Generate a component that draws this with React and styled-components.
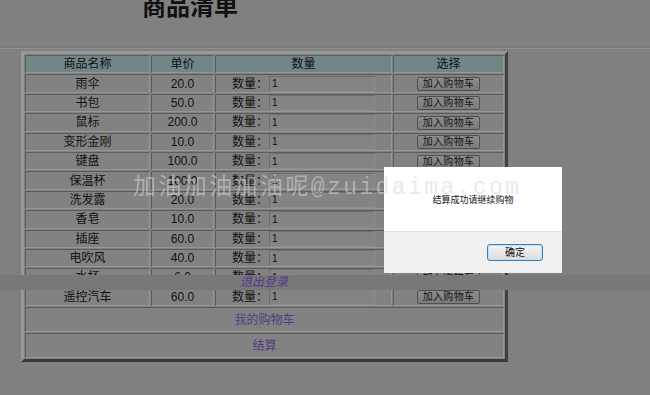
import React from "react";
import styled, { createGlobalStyle } from "styled-components";

const GlobalStyle = createGlobalStyle`
  html, body { margin: 0; padding: 0; }
  body {
    background: #808080;
    font-family: "Liberation Sans", "Noto Sans CJK SC", sans-serif;
    color: #111;
    overflow: hidden;
  }
`;

const Page = styled.div`
  position: relative;
  width: 650px;
  height: 395px;
  overflow: hidden;
`;

const Title = styled.h1`
  margin: -5px 0 0 142px;
  font-size: 24px;
  line-height: 24px;
  font-weight: 700;
  color: #111;
`;

const Rule = styled.div`
  margin-top: 28px;
  height: 0;
  border-top: 1px solid #7a7a7a;
  border-bottom: 1px solid #909090;
`;

const Table = styled.table`
  margin: 2px 0 0 21px;
  width: 487px;
  border-collapse: separate;
  border-spacing: 1px;
  border: 3px solid;
  border-color: #989898 #404040 #3a3a3a #989898;
  table-layout: fixed;
  font-size: 12px;
`;

const Cell = styled.td`
  height: 16.4px;
  padding: 0;
  border: 1px solid;
  border-color: #5c5c5c #979797 #979797 #5c5c5c;
  background: ${(p) => (p.$head ? "#718686" : "#828282")};
  font-weight: 400;
  text-align: center;
  vertical-align: middle;
  line-height: 14px;
  white-space: nowrap;
  overflow: hidden;
`;

const FootCell = styled(Cell)`
  height: 23px;
`;

const Qty = styled.span`
  display: inline-flex;
  align-items: center;
  gap: 1px;
`;

const QtyInput = styled.input`
  box-sizing: border-box;
  width: 106px;
  height: 16px;
  margin: 0;
  padding: 0 2px;
  border: 1px solid;
  border-color: #6e6e6e #8e8e8e #8e8e8e #6e6e6e;
  background: #848484;
  font: 10px "Liberation Sans", sans-serif;
  color: #111;
`;

const AddButton = styled.button`
  box-sizing: border-box;
  width: 63px;
  height: 14px;
  margin: 1px 0 0 0;
  padding: 0;
  border: 1px solid #505050;
  border-radius: 2px;
  background: linear-gradient(#8c8c8c, #7b7b7b);
  font: 10px/12px "Liberation Sans", "Noto Sans CJK SC", sans-serif;
  letter-spacing: 0.3px;
  color: #151515;
`;

const LinkText = styled.span`
  color: #543b84;
  font-size: 12px;
`;

const Logout = styled.div`
  position: absolute;
  left: 0;
  top: 275px;
  width: 650px;
  height: 15px;
  padding-right: 122px;
  box-sizing: border-box;
  background: #787878;
  text-align: center;
  font-size: 12px;
  line-height: 15px;
  font-style: italic;
  color: #54388a;
`;

const Watermark = styled.div`
  position: absolute;
  left: 133px;
  top: 175px;
  font-family: "Liberation Mono", "Noto Sans CJK SC", monospace;
  font-size: 23px;
  line-height: 26px;
  letter-spacing: 2.4px;
  white-space: nowrap;
  color: rgba(215, 215, 215, 0.55);
  z-index: 3;
  pointer-events: none;
`;

const Dialog = styled.div`
  position: absolute;
  left: 384px;
  top: 167px;
  width: 178px;
  height: 106px;
  display: flex;
  flex-direction: column;
  background: #fff;
  z-index: 2;
`;

const DialogBody = styled.div`
  height: 64px;
  display: flex;
  align-items: center;
  justify-content: center;
  font-size: 9px;
  color: #111;
`;

const DialogFoot = styled.div`
  flex: 1;
  background: #f0f0f0;
  border-top: 1px solid #e2e2e2;
  display: flex;
  justify-content: flex-end;
  align-items: flex-start;
  padding: 12px 19px 0 0;
`;

const OkButton = styled.button`
  box-sizing: border-box;
  width: 56px;
  height: 17px;
  padding: 0;
  border: 1px solid #3d7fb4;
  border-radius: 3px;
  background: linear-gradient(#f4f4f4, #dcdcdc);
  box-shadow: inset 0 0 0 1px #bfe0f5;
  font: 10px/14px "Liberation Sans", "Noto Sans CJK SC", sans-serif;
  color: #111;
`;

const goods = [
  ["雨伞", "20.0"],
  ["书包", "50.0"],
  ["鼠标", "200.0"],
  ["变形金刚", "10.0"],
  ["键盘", "100.0"],
  ["保温杯", "100.0"],
  ["洗发露", "20.0"],
  ["香皂", "10.0"],
  ["插座", "60.0"],
  ["电吹风", "40.0"],
  ["水杯", "6.0"],
  ["遥控汽车", "60.0"],
];

export default function App() {
  return (
    <>
      <GlobalStyle />
      <Page>
        <Title>商品清单</Title>
        <Rule />
        <Table>
          <colgroup>
            <col style={{ width: 125 }} />
            <col style={{ width: 63 }} />
            <col style={{ width: 177 }} />
            <col style={{ width: 111 }} />
          </colgroup>
          <thead>
            <tr>
              <Cell $head as="th">商品名称</Cell>
              <Cell $head as="th">单价</Cell>
              <Cell $head as="th">数量</Cell>
              <Cell $head as="th">选择</Cell>
            </tr>
          </thead>
          <tbody>
            {goods.map(([name, price]) => (
              <tr key={name}>
                <Cell>{name}</Cell>
                <Cell>{price}</Cell>
                <Cell>
                  <Qty>
                    数量：
                    <QtyInput defaultValue="1" />
                  </Qty>
                </Cell>
                <Cell>
                  <AddButton>加入购物车</AddButton>
                </Cell>
              </tr>
            ))}
            <tr>
              <FootCell colSpan={4}>
                <LinkText>我的购物车</LinkText>
              </FootCell>
            </tr>
            <tr>
              <FootCell colSpan={4}>
                <LinkText>结算</LinkText>
              </FootCell>
            </tr>
          </tbody>
        </Table>
        <Logout>退出登录</Logout>
        <Watermark>加油加油加油呢@zuidaima.com</Watermark>
        <Dialog>
          <DialogBody>结算成功请继续购物</DialogBody>
          <DialogFoot>
            <OkButton>确定</OkButton>
          </DialogFoot>
        </Dialog>
      </Page>
    </>
  );
}
